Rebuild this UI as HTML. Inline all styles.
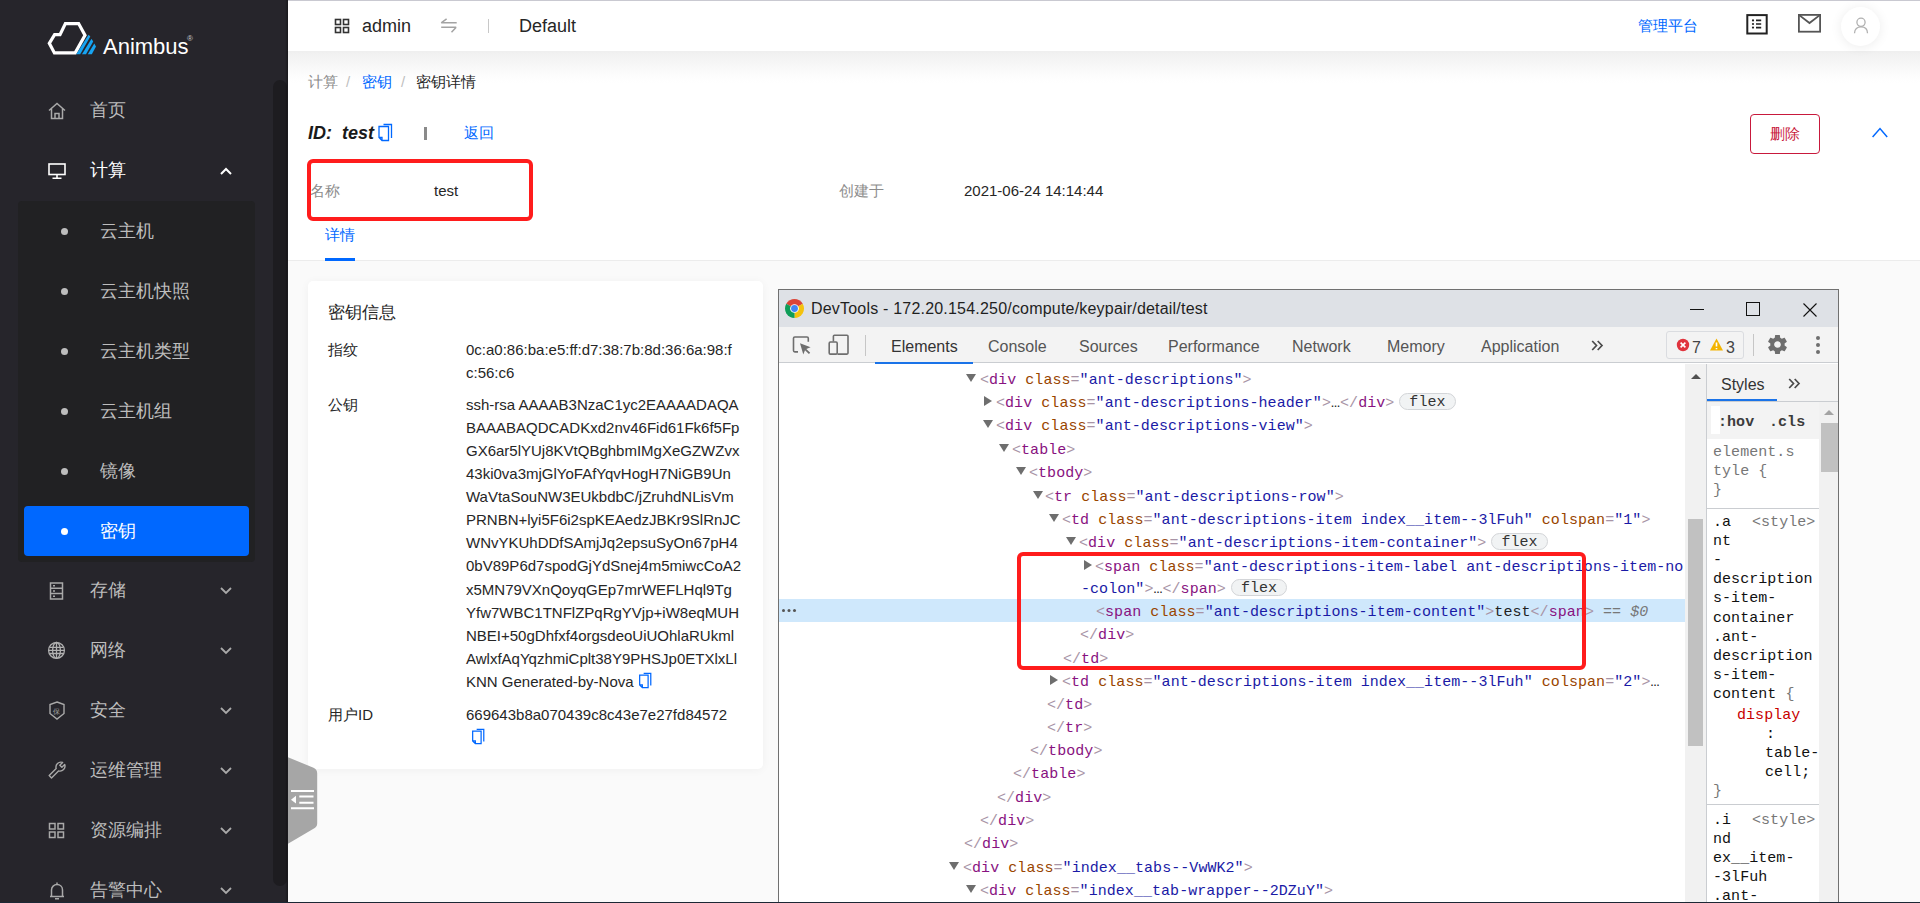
<!DOCTYPE html>
<html><head><meta charset="utf-8">
<style>
*{box-sizing:border-box;margin:0;padding:0}
html,body{width:1920px;height:903px;overflow:hidden;background:#fafafa;font-family:"Liberation Sans",sans-serif;position:relative}
.a{position:absolute;white-space:nowrap}
/* sidebar */
#side{position:absolute;left:0;top:0;width:288px;height:903px;background:#26252b}
#sbtrack{position:absolute;left:273px;top:80px;width:14px;height:806px;border-radius:7px;background:#1d1c20}
#sub{position:absolute;left:18px;top:201px;width:237px;height:361px;background:#212123;border-radius:4px}
#act{position:absolute;left:24px;top:506px;width:225px;height:50px;background:#0068ff;border-radius:4px}
.mi{position:absolute;left:90px;font-size:18px;color:#bdbdbd;line-height:20px}
.si{position:absolute;left:100px;font-size:18px;color:#bdbdbd;line-height:20px}
.dot{position:absolute;left:61px;width:7px;height:7px;border-radius:4px;background:#bdbdbd}
.chev{position:absolute;left:221px;width:10px;height:10px}
.ico{position:absolute;left:47px;width:18px;height:18px}
/* header */
#hdr{position:absolute;left:288px;top:0;width:1632px;height:51px;background:#fff}
#hshadow{position:absolute;left:288px;top:51px;width:1632px;height:32px;background:linear-gradient(#efefef,#f4f4f4 25%,#f9f9f9 55%,#fdfdfd 80%,#fff)}
#topline{position:absolute;left:288px;top:0;width:1632px;height:1px;background:#c9c9d1}
#band{position:absolute;left:288px;top:51px;width:1632px;height:210px;background:#fff}
#bandline{position:absolute;left:288px;top:260px;width:1632px;height:1px;background:#ececec}
.tab{font-size:16px;line-height:19px;color:#555}
.mono{font-family:"Liberation Mono",monospace;font-size:15px;letter-spacing:0.05px}
.ln{line-height:22px}
.p{color:#a894a6}.t{color:#881280}.n{color:#994500}.v{color:#1a1aa6}.k{color:#222}.z{color:#777;font-style:italic}
.fx{display:inline-block;line-height:12px;padding:3px 9px 0;border:1px solid #d3d5d8;border-radius:9px;background:#f1f3f4;color:#333;margin-left:5px;position:relative;top:-1px}
.tri-d{width:0;height:0;border-left:5px solid transparent;border-right:5px solid transparent;border-top:8px solid #6e6e6e}
.tri-r{width:0;height:0;border-top:5px solid transparent;border-bottom:5px solid transparent;border-left:8px solid #6e6e6e}
</style></head><body>
<div id="side">
  <svg class="a" style="left:0;top:0" width="110" height="70" viewBox="0 0 110 70">
    <path d="M49.3 43.3 L54.6 34.7 L60 34.7 L65.4 23.6 L78.6 23.6 L85 35.2 L75.2 52.9 L54.4 52.9 Z" fill="none" stroke="#fff" stroke-width="3.2" stroke-linejoin="miter"/>
    <polygon points="76.2,54.3 80.2,54.3 90.3,36.5 88.6,34.7" fill="#17a4f2"/>
    <polygon points="82,54.3 86,54.3 93.2,41.5 91.5,38.8" fill="#17a4f2"/>
    <polygon points="87.8,54.3 91.8,54.3 96,46.5 94.3,43.5" fill="#17a4f2"/>
  </svg>
  <div class="a" style="left:103px;top:34.5px;font-size:22px;color:#fff;line-height:24px">Animbus</div>
  <div class="a" style="left:187px;top:34px;font-size:8px;color:#ccc">®</div>

  <svg class="a" style="left:47px;top:101px" width="20" height="20" viewBox="0 0 20 20" fill="none" stroke="#a9a9a9" stroke-width="1.5"><path d="M2 9.5 L10 2.5 L18 9.5 M4.5 7.5 V17.5 H15.5 V7.5 M8 17.5 V12.5 H12 V17.5"/></svg>
  <svg class="a" style="left:47px;top:161px" width="20" height="20" viewBox="0 0 20 20" fill="none" stroke="#fff" stroke-width="1.6"><rect x="2" y="3" width="16" height="10.5"/><path d="M10 13.5 V17 M5.5 17.2 H14.5"/></svg>
  <svg class="a" style="left:218px;top:164px" width="16" height="14" viewBox="0 0 16 14" fill="none" stroke="#fff" stroke-width="2"><path d="M3 10 L8 5 L13 10"/></svg>
  <svg class="a" style="left:48px;top:581px" width="18" height="20" viewBox="0 0 18 20" fill="none" stroke="#a9a9a9" stroke-width="1.5"><rect x="2.5" y="2" width="12" height="16"/><path d="M2.5 7.3 H14.5 M2.5 12.6 H14.5 M5 4.7 H7 M5 10 H7 M5 15.3 H7"/></svg>
  <svg class="a" style="left:47px;top:641px" width="20" height="20" viewBox="0 0 20 20" fill="none" stroke="#b0b0b0" stroke-width="1.3"><circle cx="9.5" cy="9.4" r="7.9"/><ellipse cx="9.5" cy="9.4" rx="3.9" ry="7.9"/><path d="M9.5 1.5 V17.3 M1.6 9.4 H17.4 M2.6 6.3 H16.4 M2.6 12.5 H16.4"/></svg>
  <svg class="a" style="left:47px;top:700px" width="20" height="22" viewBox="0 0 20 22" fill="none" stroke="#a9a9a9" stroke-width="1.4"><path d="M10 2 L17 4.5 V13.5 L10 19 L3 13.5 V4.5 Z"/><text x="6" y="14" font-size="7" fill="#a9a9a9" stroke="none">保</text></svg>
  <svg class="a" style="left:47px;top:760px" width="20" height="20" viewBox="0 0 20 20" fill="none" stroke="#a9a9a9" stroke-width="1.4" stroke-linejoin="round"><path d="M2.2 15.6 L9.2 8.6 A5 5 0 0 1 15.6 2.4 L12.8 5.2 L14.9 7.3 L17.7 4.5 A5 5 0 0 1 11.5 10.9 L4.5 17.9 Z"/></svg>
  <svg class="a" style="left:47px;top:821px" width="20" height="20" viewBox="0 0 20 20" fill="none" stroke="#a9a9a9" stroke-width="1.5"><rect x="2.5" y="2.5" width="5.5" height="5.5"/><rect x="11" y="2.5" width="5.5" height="5.5"/><rect x="2.5" y="11" width="5.5" height="5.5"/><rect x="11" y="11" width="5.5" height="5.5"/></svg>
  <svg class="a" style="left:47px;top:881px" width="20" height="20" viewBox="0 0 20 20" fill="none" stroke="#a9a9a9" stroke-width="1.5"><path d="M4.5 15.5 V9 C4.5 5.8 7 3.6 10 3.6 C13 3.6 15.5 5.8 15.5 9 V15.5 Z M3 15.5 H17 M10 1.5 V3.6 M8 17.8 H12"/></svg>
  <svg class="a" style="left:218px;top:584px" width="16" height="14" viewBox="0 0 16 14" fill="none" stroke="#a9a9a9" stroke-width="1.8"><path d="M3 4 L8 9 L13 4"/></svg>
  <svg class="a" style="left:218px;top:644px" width="16" height="14" viewBox="0 0 16 14" fill="none" stroke="#a9a9a9" stroke-width="1.8"><path d="M3 4 L8 9 L13 4"/></svg>
  <svg class="a" style="left:218px;top:704px" width="16" height="14" viewBox="0 0 16 14" fill="none" stroke="#a9a9a9" stroke-width="1.8"><path d="M3 4 L8 9 L13 4"/></svg>
  <svg class="a" style="left:218px;top:764px" width="16" height="14" viewBox="0 0 16 14" fill="none" stroke="#a9a9a9" stroke-width="1.8"><path d="M3 4 L8 9 L13 4"/></svg>
  <svg class="a" style="left:218px;top:824px" width="16" height="14" viewBox="0 0 16 14" fill="none" stroke="#a9a9a9" stroke-width="1.8"><path d="M3 4 L8 9 L13 4"/></svg>
  <svg class="a" style="left:218px;top:884px" width="16" height="14" viewBox="0 0 16 14" fill="none" stroke="#a9a9a9" stroke-width="1.8"><path d="M3 4 L8 9 L13 4"/></svg>
  <div id="sbtrack"></div><div class="a" style="left:285px;top:0;width:3px;height:903px;background:linear-gradient(90deg,rgba(0,0,0,0),rgba(0,0,0,0.35))"></div>
  <div id="sub"></div>
  <div id="act"></div>
  <div class="mi" style="top:100px">首页</div>
  <div class="mi" style="top:160px;color:#fff">计算</div>
  <div class="dot" style="top:228px"></div><div class="si" style="top:221px">云主机</div>
  <div class="dot" style="top:288px"></div><div class="si" style="top:281px">云主机快照</div>
  <div class="dot" style="top:348px"></div><div class="si" style="top:341px">云主机类型</div>
  <div class="dot" style="top:408px"></div><div class="si" style="top:401px">云主机组</div>
  <div class="dot" style="top:468px"></div><div class="si" style="top:461px">镜像</div>
  <div class="dot" style="top:528px;background:#fff"></div><div class="si" style="top:521px;color:#fff">密钥</div>
  <div class="mi" style="top:580px">存储</div>
  <div class="mi" style="top:640px">网络</div>
  <div class="mi" style="top:700px">安全</div>
  <div class="mi" style="top:760px">运维管理</div>
  <div class="mi" style="top:820px">资源编排</div>
  <div class="mi" style="top:880px">告警中心</div>
</div>
<div id="band"></div>
<div id="bandline"></div>
<div id="hshadow"></div>
<div id="hdr"></div>
<div id="topline"></div>
<!-- header content -->
<svg class="a" style="left:334px;top:17.5px" width="16" height="16" viewBox="0 0 16 16" fill="none" stroke="#333" stroke-width="1.6"><rect x="1.5" y="1.5" width="5" height="5"/><rect x="9.5" y="1.5" width="5" height="5"/><rect x="1.5" y="9.5" width="5" height="5"/><rect x="9.5" y="9.5" width="5" height="5"/></svg>
<div class="a" style="left:362px;top:16px;font-size:18px;line-height:20px;color:#262626">admin</div>
<svg class="a" style="left:438px;top:15px" width="22" height="20" viewBox="0 0 22 20" fill="none" stroke="#a3a3a3" stroke-width="1.5"><path d="M3.2 7.8 H18.7 M3.2 7.8 L8.6 3.9 M3.2 12.2 H18.2 M18.2 12.2 L13.5 17.2"/></svg>
<div class="a" style="left:488px;top:19px;width:1px;height:14px;background:#c8c8c8"></div>
<div class="a" style="left:519px;top:16px;font-size:18px;line-height:20px;color:#262626">Default</div>
<div class="a" style="left:1638px;top:17px;font-size:15px;line-height:18px;color:#0068ff">管理平台</div>
<svg class="a" style="left:1745px;top:13px" width="24" height="22" viewBox="0 0 24 22" fill="none" stroke="#222" stroke-width="2"><rect x="2.3" y="2.1" width="19.4" height="18.4"/><path d="M11 7.4 H16.2 M11 11 H16.2 M11 14.6 H16.2" stroke-width="1.7"/><circle cx="8" cy="7.4" r="1.1" fill="#222" stroke="none"/><circle cx="8" cy="11" r="1.1" fill="#222" stroke="none"/><circle cx="8" cy="14.6" r="1.1" fill="#222" stroke="none"/></svg>
<svg class="a" style="left:1797px;top:13px" width="25" height="20" viewBox="0 0 25 20" fill="none" stroke="#555" stroke-width="1.8"><rect x="1.9" y="1.9" width="21.2" height="16.8"/><path d="M1.9 1.9 L12.5 10 L23.1 1.9"/></svg>
<div class="a" style="left:1841px;top:7px;width:39px;height:39px;border-radius:20px;background:#fff;box-shadow:0 1px 12px rgba(0,0,0,0.08)"></div>
<svg class="a" style="left:1852px;top:16px" width="18" height="19" viewBox="0 0 18 19" fill="none" stroke="#b0b0b0" stroke-width="1.3"><circle cx="9" cy="6.3" r="4.1"/><path d="M2.5 17.2 C2.5 13 5.3 10.8 9 10.8 C12.7 10.8 15.5 13 15.5 17.2"/></svg>
<!-- breadcrumb -->
<div class="a" style="left:308px;top:74px;font-size:15px;line-height:16px;color:#8c8c8c">计算</div>
<div class="a" style="left:346px;top:74px;font-size:15px;line-height:16px;color:#bfbfbf">/</div>
<div class="a" style="left:362px;top:74px;font-size:15px;line-height:16px;color:#0068ff">密钥</div>
<div class="a" style="left:401px;top:74px;font-size:15px;line-height:16px;color:#bfbfbf">/</div>
<div class="a" style="left:416px;top:74px;font-size:15px;line-height:16px;color:#262626">密钥详情</div>
<!-- ID row -->
<div class="a" style="left:308px;top:123px;font-size:18px;line-height:20px;color:#1a1a1a;font-weight:bold;font-style:italic">ID:&nbsp; test</div>
<svg class="a" style="left:376px;top:122px" width="18" height="21" viewBox="0 0 18 21" fill="none" stroke="#0068ff" stroke-width="1.3"><path d="M7.5 2.5 H15.5 V16"/><path d="M3 4.5 H12.5 V18.5 H6 L3 15.5 Z M3 15.5 H6 V18.5"/></svg>
<div class="a" style="left:424px;top:127px;width:3px;height:13px;background:#8a8a8a"></div>
<div class="a" style="left:464px;top:125px;font-size:15px;line-height:16px;color:#0068ff">返回</div>
<div class="a" style="left:1750px;top:114px;width:70px;height:40px;border:1px solid #c8193c;border-radius:4px;color:#c8193c;font-size:15px;line-height:38px;text-align:center">删除</div>
<svg class="a" style="left:1870px;top:124px" width="20" height="16" viewBox="0 0 20 16" fill="none" stroke="#0068ff" stroke-width="1.5"><path d="M2.6 13 L10 4.6 L17.2 13"/></svg>
<!-- names row -->
<div class="a" style="left:310px;top:183px;font-size:15px;line-height:16px;color:#8c8c8c">名称</div>
<div class="a" style="left:434px;top:183px;font-size:15px;line-height:16px;color:#262626">test</div>
<div class="a" style="left:839px;top:183px;font-size:15px;line-height:16px;color:#8c8c8c">创建于</div>
<div class="a" style="left:964px;top:183px;font-size:15px;line-height:16px;color:#262626">2021-06-24 14:14:44</div>
<div class="a" style="left:307px;top:159px;width:226px;height:62px;border:4px solid #ff1c1c;border-radius:6px"></div>
<!-- tab -->
<div class="a" style="left:325px;top:226px;font-size:15px;line-height:18px;color:#0068ff">详情</div>
<div class="a" style="left:325px;top:258px;width:30px;height:3px;background:#0068ff"></div>
<!-- card -->
<div class="a" style="left:308px;top:281px;width:455px;height:488px;background:#fff;border-radius:5px;box-shadow:0 1px 10px rgba(0,0,0,0.045)"></div>
<div class="a" style="left:328px;top:303px;font-size:17px;line-height:20px;color:#262626">密钥信息</div>
<div id="kv" class="a" style="left:328px;top:338px;width:420px;font-size:15px;line-height:23.06px;color:#262626;white-space:normal">
 <div class="a" style="left:0;top:0">指纹</div>
 <div class="a" style="left:138px;top:0">0c:a0:86:ba:e5:ff:d7:38:7b:8d:36:6a:98:f<br>c:56:c6</div>
 <div class="a" style="left:0;top:55px">公钥</div>
 <div class="a" style="left:138px;top:55px">ssh-rsa AAAAB3NzaC1yc2EAAAADAQA<br>BAAABAQDCADKxd2nv46Fid61Fk6f5Fp<br>GX6ar5lYUj8KVtQBghbmIMgXeGZWZvx<br>43ki0va3mjGlYoFAfYqvHogH7NiGB9Un<br>WaVtaSouNW3EUkbdbC/jZruhdNLisVm<br>PRNBN+lyi5F6i2spKEAedzJBKr9SlRnJC<br>WNvYKUhDDfSAmjJq2epsuSyOn67pH4<br>0bV89P6d7spodGjYdSnej4m5miwcCoA2<br>x5MN79VXnQoyqGEp7mrWEFLHql9Tg<br>Yfw7WBC1TNFlZPqRgYVjp+iW8eqMUH<br>NBEI+50gDhfxf4orgsdeoUiUOhlaRUkml<br>AwlxfAqYqzhmiCplt38Y9PHSJp0ETXlxLl<br>KNN Generated-by-Nova</div>
 <div class="a" style="left:0;top:365px">用户ID</div>
 <div class="a" style="left:138px;top:365px">669643b8a070439c8c43e7e27fd84572</div>
</div>
<svg class="a" style="left:637px;top:671px" width="16" height="19" viewBox="0 0 18 21" fill="none" stroke="#0068ff" stroke-width="1.4"><path d="M7.5 2.5 H15.5 V16"/><path d="M3 4.5 H12.5 V18.5 H6 L3 15.5 Z M3 15.5 H6 V18.5"/></svg>
<svg class="a" style="left:470px;top:727px" width="16" height="19" viewBox="0 0 18 21" fill="none" stroke="#0068ff" stroke-width="1.4"><path d="M7.5 2.5 H15.5 V16"/><path d="M3 4.5 H12.5 V18.5 H6 L3 15.5 Z M3 15.5 H6 V18.5"/></svg>
<!-- devtools -->
<div id="dt" class="a" style="left:778px;top:289px;width:1061px;height:620px;border:1px solid #707070;background:#fff;overflow:hidden">
 <div class="a" style="left:0;top:0;width:1059px;height:37px;background:#dee1e6"></div>
 <svg class="a" style="left:6px;top:9px" width="19" height="19" viewBox="0 0 20 20">
  <path d="M10 10 L1.34 5 A10 10 0 0 1 18.66 5 Z" fill="#db4437"/>
  <path d="M10 10 L18.66 5 A10 10 0 0 1 10 20 Z" fill="#f4c20d"/>
  <path d="M10 10 L10 20 A10 10 0 0 1 1.34 5 Z" fill="#0f9d58"/>
  <circle cx="10" cy="10" r="4.6" fill="#fff"/><circle cx="10" cy="10" r="3.6" fill="#4285f4"/>
 </svg>
 <div class="a" style="left:32px;top:9px;font-size:16px;line-height:19px;color:#1f1f1f;letter-spacing:0.2px">DevTools - 172.20.154.250/compute/keypair/detail/test</div>
 <div class="a" style="left:911px;top:19px;width:14px;height:1px;background:#111"></div>
 <div class="a" style="left:967px;top:12px;width:14px;height:14px;border:1px solid #111"></div>
 <svg class="a" style="left:1023px;top:12px" width="16" height="16" viewBox="0 0 16 16" stroke="#111" stroke-width="1.1"><path d="M1.5 1.5 L14.5 14.5 M14.5 1.5 L1.5 14.5"/></svg>
 <div class="a" style="left:0;top:37px;width:1059px;height:36px;background:#f3f3f3;border-bottom:1px solid #cacdd1"></div>
 <svg class="a" style="left:12px;top:45px" width="22" height="22" viewBox="0 0 22 22" fill="none" stroke="#6e6e6e" stroke-width="1.6"><path d="M7 16.9 H3.8 Q2.5 16.9 2.5 15.6 V3.3 Q2.5 2 3.8 2 H16 Q17.3 2 17.3 3.3 V6.8"/><path d="M9 8.3 L19.6 12.2 L15.3 13.9 L19.2 17.8 L17.9 19.1 L14 15.2 L12.3 19.5 Z" fill="#6e6e6e" stroke="none"/></svg>
 <svg class="a" style="left:48px;top:43px" width="24" height="24" viewBox="0 0 24 24" fill="none" stroke="#6e6e6e" stroke-width="1.6"><path d="M6.4 8.6 V3.2 Q6.4 2.2 7.4 2.2 H20 Q21 2.2 21 3.2 V20.1 Q21 21.1 20 21.1 H10.5"/><rect x="2.2" y="9" width="8" height="12.1" rx="1.2"/></svg>
 <div class="a" style="left:86px;top:45px;width:1px;height:21px;background:#c6c6c6"></div>
 <div class="a tab" style="left:112px;top:47px;color:#333">Elements</div>
 <div class="a" style="left:96px;top:72px;width:98px;height:2px;background:#1a73e8"></div>
 <div class="a tab" style="left:209px;top:47px">Console</div>
 <div class="a tab" style="left:300px;top:47px">Sources</div>
 <div class="a tab" style="left:389px;top:47px">Performance</div>
 <div class="a tab" style="left:513px;top:47px">Network</div>
 <div class="a tab" style="left:608px;top:47px">Memory</div>
 <div class="a tab" style="left:702px;top:47px">Application</div>
 <svg class="a" style="left:812px;top:50px" width="13" height="11" viewBox="0 0 13 11" fill="none" stroke="#4a4a4a" stroke-width="1.7"><path d="M1.2 1 L5.5 5.5 L1.2 10 M6.7 1 L11 5.5 L6.7 10"/></svg>
 <div class="a" style="left:887px;top:41px;width:78px;height:28px;border:1px solid #dadce0;border-radius:3px"></div>
 <svg class="a" style="left:897px;top:48px" width="14" height="14" viewBox="0 0 14 14"><circle cx="7" cy="7" r="6.2" fill="#e0333d"/><path d="M4.6 4.6 L9.4 9.4 M9.4 4.6 L4.6 9.4" stroke="#fff" stroke-width="1.6"/></svg>
 <div class="a tab" style="left:913px;top:48px;color:#444">7</div>
 <svg class="a" style="left:930px;top:47px" width="15" height="15" viewBox="0 0 15 15"><path d="M7.5 1.5 L14 13.5 H1 Z" fill="#f3b400"/><path d="M7.5 5.5 V9.5 M7.5 11 V12.3" stroke="#fff" stroke-width="1.6"/></svg>
 <div class="a tab" style="left:947px;top:48px;color:#444">3</div>
 <div class="a" style="left:974px;top:44px;width:1px;height:22px;background:#c6c6c6"></div>
 <svg class="a" style="left:987px;top:43px" width="23" height="23" viewBox="0 0 24 24"><path fill="#6e6e6e" d="M19.4 13c.04-.32.06-.66.06-1s-.02-.68-.07-1l2.11-1.65c.19-.15.24-.42.12-.64l-2-3.46c-.12-.22-.39-.3-.61-.22l-2.49 1c-.52-.4-1.08-.73-1.69-.98l-.38-2.65C14.46 2.18 14.25 2 14 2h-4c-.25 0-.46.18-.49.42l-.38 2.65c-.61.25-1.17.59-1.69.98l-2.49-1c-.23-.09-.49 0-.61.22l-2 3.46c-.13.22-.07.49.12.64L4.57 11c-.04.32-.07.65-.07 1s.02.68.07 1l-2.11 1.65c-.19.15-.24.42-.12.64l2 3.46c.12.22.39.3.61.22l2.49-1c.52.4 1.08.73 1.69.98l.38 2.65c.03.24.24.42.49.42h4c.25 0 .46-.18.49-.42l.38-2.65c.61-.25 1.17-.59 1.69-.98l2.49 1c.23.09.49 0 .61-.22l2-3.46c.12-.22.07-.49-.12-.64L19.4 13zM12 15.5c-1.93 0-3.5-1.57-3.5-3.5s1.57-3.5 3.5-3.5 3.5 1.57 3.5 3.5-1.57 3.5-3.5 3.5z"/></svg>
 <div class="a" style="left:1037px;top:46px;width:4px;height:4px;border-radius:2px;background:#6e6e6e"></div>
 <div class="a" style="left:1037px;top:53px;width:4px;height:4px;border-radius:2px;background:#6e6e6e"></div>
 <div class="a" style="left:1037px;top:60px;width:4px;height:4px;border-radius:2px;background:#6e6e6e"></div>
 <!-- elements body -->
 <div id="el" class="a" style="left:0;top:74px;width:906px;height:560px;background:#fff"></div>
 <div class="a" style="left:906px;top:74px;width:21px;height:560px;background:#f1f1f1"></div>
 <div class="a" style="left:927px;top:74px;width:1px;height:560px;background:#cacdd1"></div>
 <div class="a" style="left:912px;top:84px;width:0;height:0;border-left:5px solid transparent;border-right:5px solid transparent;border-bottom:5px solid #505050"></div>
 <div class="a" style="left:909px;top:229px;width:15px;height:227px;background:#c1c1c1"></div>
<div class="a" style="left:0;top:309px;width:906px;height:23px;background:#cfe8fc"></div>
<div class="a" style="left:3px;top:319px;width:3.2px;height:3.2px;border-radius:2px;background:#555;box-shadow:5.5px 0 0 #555,11px 0 0 #555"></div>
<div class="a tri-d" style="left:187px;top:84px"></div>
<div class="a mono ln" style="left:201px;top:80px"><span class="p">&lt;</span><span class="t">div</span> <span class="n">class</span><span class="p">=</span><span class="v">"ant-descriptions"</span><span class="p">&gt;</span></div>
<div class="a tri-r" style="left:205px;top:106px"></div>
<div class="a mono ln" style="left:217px;top:103px"><span class="p">&lt;</span><span class="t">div</span> <span class="n">class</span><span class="p">=</span><span class="v">"ant-descriptions-header"</span><span class="p">&gt;</span><span class="k">…</span><span class="p">&lt;/</span><span class="t">div</span><span class="p">&gt;</span><span class="fx">flex</span></div>
<div class="a tri-d" style="left:204px;top:130px"></div>
<div class="a mono ln" style="left:217px;top:126px"><span class="p">&lt;</span><span class="t">div</span> <span class="n">class</span><span class="p">=</span><span class="v">"ant-descriptions-view"</span><span class="p">&gt;</span></div>
<div class="a tri-d" style="left:220px;top:154px"></div>
<div class="a mono ln" style="left:233px;top:150px"><span class="p">&lt;</span><span class="t">table</span><span class="p">&gt;</span></div>
<div class="a tri-d" style="left:237px;top:177px"></div>
<div class="a mono ln" style="left:250px;top:173px"><span class="p">&lt;</span><span class="t">tbody</span><span class="p">&gt;</span></div>
<div class="a tri-d" style="left:254px;top:201px"></div>
<div class="a mono ln" style="left:266px;top:197px"><span class="p">&lt;</span><span class="t">tr</span> <span class="n">class</span><span class="p">=</span><span class="v">"ant-descriptions-row"</span><span class="p">&gt;</span></div>
<div class="a tri-d" style="left:270px;top:224px"></div>
<div class="a mono ln" style="left:283px;top:220px"><span class="p">&lt;</span><span class="t">td</span> <span class="n">class</span><span class="p">=</span><span class="v">"ant-descriptions-item index__item--3lFuh"</span> <span class="n">colspan</span><span class="p">=</span><span class="v">"1"</span><span class="p">&gt;</span></div>
<div class="a tri-d" style="left:287px;top:247px"></div>
<div class="a mono ln" style="left:300px;top:243px"><span class="p">&lt;</span><span class="t">div</span> <span class="n">class</span><span class="p">=</span><span class="v">"ant-descriptions-item-container"</span><span class="p">&gt;</span><span class="fx">flex</span></div>
<div class="a tri-r" style="left:305px;top:270px"></div>
<div class="a mono ln" style="left:316px;top:267px"><span class="p">&lt;</span><span class="t">span</span> <span class="n">class</span><span class="p">=</span><span class="v">"ant-descriptions-item-label ant-descriptions-item-no</span></div>
<div class="a mono ln" style="left:302px;top:289px"><span class="v">-colon"</span><span class="p">&gt;</span><span class="k">…</span><span class="p">&lt;/</span><span class="t">span</span><span class="p">&gt;</span><span class="fx">flex</span></div>
<div class="a mono ln" style="left:317px;top:312px"><span class="p">&lt;</span><span class="t">span</span> <span class="n">class</span><span class="p">=</span><span class="v">"ant-descriptions-item-content"</span><span class="p">&gt;</span><span class="k">test</span><span class="p">&lt;/</span><span class="t">span</span><span class="p">&gt;</span> <span class="z">== $0</span></div>
<div class="a mono ln" style="left:301px;top:335px"><span class="p">&lt;/</span><span class="t">div</span><span class="p">&gt;</span></div>
<div class="a mono ln" style="left:284px;top:359px"><span class="p">&lt;/</span><span class="t">td</span><span class="p">&gt;</span></div>
<div class="a tri-r" style="left:271px;top:385px"></div>
<div class="a mono ln" style="left:283px;top:382px"><span class="p">&lt;</span><span class="t">td</span> <span class="n">class</span><span class="p">=</span><span class="v">"ant-descriptions-item index__item--3lFuh"</span> <span class="n">colspan</span><span class="p">=</span><span class="v">"2"</span><span class="p">&gt;</span><span class="k">…</span></div>
<div class="a mono ln" style="left:268px;top:405px"><span class="p">&lt;/</span><span class="t">td</span><span class="p">&gt;</span></div>
<div class="a mono ln" style="left:268px;top:428px"><span class="p">&lt;/</span><span class="t">tr</span><span class="p">&gt;</span></div>
<div class="a mono ln" style="left:251px;top:451px"><span class="p">&lt;/</span><span class="t">tbody</span><span class="p">&gt;</span></div>
<div class="a mono ln" style="left:234px;top:474px"><span class="p">&lt;/</span><span class="t">table</span><span class="p">&gt;</span></div>
<div class="a mono ln" style="left:218px;top:498px"><span class="p">&lt;/</span><span class="t">div</span><span class="p">&gt;</span></div>
<div class="a mono ln" style="left:201px;top:521px"><span class="p">&lt;/</span><span class="t">div</span><span class="p">&gt;</span></div>
<div class="a mono ln" style="left:185px;top:544px"><span class="p">&lt;/</span><span class="t">div</span><span class="p">&gt;</span></div>
<div class="a tri-d" style="left:170px;top:572px"></div>
<div class="a mono ln" style="left:184px;top:568px"><span class="p">&lt;</span><span class="t">div</span> <span class="n">class</span><span class="p">=</span><span class="v">"index__tabs--VwWK2"</span><span class="p">&gt;</span></div>
<div class="a tri-d" style="left:187px;top:595px"></div>
<div class="a mono ln" style="left:201px;top:591px"><span class="p">&lt;</span><span class="t">div</span> <span class="n">class</span><span class="p">=</span><span class="v">"index__tab-wrapper--2DZuY"</span><span class="p">&gt;</span></div>
 <!-- styles pane -->
 <div class="a" style="left:928px;top:74px;width:131px;height:38px;background:#f3f3f3;border-bottom:1px solid #cacdd1"></div>
 <div class="a tab" style="left:942px;top:85px;color:#333">Styles</div>
 <svg class="a" style="left:1009px;top:88px" width="13" height="11" viewBox="0 0 13 11" fill="none" stroke="#4a4a4a" stroke-width="1.7"><path d="M1.2 1 L5.5 5.5 L1.2 10 M6.7 1 L11 5.5 L6.7 10"/></svg>
 <div class="a" style="left:928px;top:109px;width:70px;height:2px;background:#1a73e8"></div>
 <div class="a" style="left:928px;top:112px;width:112px;height:37px;background:#f3f3f3"></div>
 <div class="a" style="left:932px;top:116px;width:9px;height:28px;background:#fff"></div>
 <div class="a" style="left:1040px;top:112px;width:19px;height:510px;background:#f1f1f1"></div>
 <div class="a" style="left:1045px;top:120px;width:0;height:0;border-left:5px solid transparent;border-right:5px solid transparent;border-bottom:5px solid #a3a3a3"></div>
 <div class="a" style="left:1042px;top:133px;width:17px;height:49px;background:#c1c1c1"></div>
 <div class="a" style="left:928px;top:218px;width:112px;height:1px;background:#cacdd1"></div>
 <div class="a" style="left:928px;top:514px;width:112px;height:1px;background:#cacdd1"></div>
 <div class="a mono ln" style="left:939px;top:122px;font-weight:bold;color:#3c3c3c">:hov</div>
 <div class="a mono ln" style="left:990px;top:122px;font-weight:bold;color:#3c3c3c">.cls</div>
 <div class="a mono ln" style="left:934px;top:152px;color:#777">element.s</div>
 <div class="a mono ln" style="left:934px;top:171px;color:#777">tyle {</div>
 <div class="a mono ln" style="left:934px;top:190px;color:#777">}</div>
 <div class="a mono ln" style="left:934px;top:222px;color:#111">.a</div>
 <div class="a mono ln" style="left:934px;top:241px;color:#111">nt</div>
 <div class="a mono ln" style="left:934px;top:260px;color:#111">-</div>
 <div class="a mono ln" style="left:934px;top:279px;color:#111">description</div>
 <div class="a mono ln" style="left:934px;top:298px;color:#111">s-item-</div>
 <div class="a mono ln" style="left:934px;top:318px;color:#111">container</div>
 <div class="a mono ln" style="left:934px;top:337px;color:#111">.ant-</div>
 <div class="a mono ln" style="left:934px;top:356px;color:#111">description</div>
 <div class="a mono ln" style="left:934px;top:375px;color:#111">s-item-</div>
 <div class="a mono ln" style="left:934px;top:394px;color:#111">content <span style="color:#777">{</span></div>
 <div class="a mono ln" style="left:973px;top:222px;color:#777">&lt;style&gt;</div>
 <div class="a mono ln" style="left:958px;top:415px;color:#c80000">display</div>
 <div class="a mono ln" style="left:987px;top:434px;color:#111">:</div>
 <div class="a mono ln" style="left:986px;top:453px;color:#111">table-</div>
 <div class="a mono ln" style="left:986px;top:472px;color:#111">cell;</div>
 <div class="a mono ln" style="left:934px;top:491px;color:#777">}</div>
 <div class="a mono ln" style="left:934px;top:520px;color:#111">.i</div>
 <div class="a mono ln" style="left:934px;top:539px;color:#111">nd</div>
 <div class="a mono ln" style="left:934px;top:558px;color:#111">ex__item-</div>
 <div class="a mono ln" style="left:934px;top:577px;color:#111">-3lFuh</div>
 <div class="a mono ln" style="left:934px;top:596px;color:#111">.ant-</div>
 <div class="a mono ln" style="left:973px;top:520px;color:#777">&lt;style&gt;</div>
</div>
<div class="a" style="left:1017px;top:552px;width:569px;height:118px;border:4px solid #ff1c1c;border-radius:6px"></div>
<!-- collapse tab -->
<svg class="a" style="left:288px;top:755px" width="32" height="92" viewBox="0 0 32 92"><path d="M0 2.2 L25.5 12.8 Q29.2 14.5 29.2 18.5 V68.5 Q29.2 72 25.5 73.8 L0 88.8 Z" fill="#a6a6a6"/><path d="M3 36 H26 M11.3 41.6 H25.5 M11.3 47.7 H25.5 M3 53.2 H26" stroke="#fff" stroke-width="2"/><path d="M3 44.7 L8 40.8 V48.5 Z" fill="#fff"/></svg>
<div class="a" style="left:0;top:902px;width:1920px;height:1px;background:#1c2835"></div>
</body></html>
